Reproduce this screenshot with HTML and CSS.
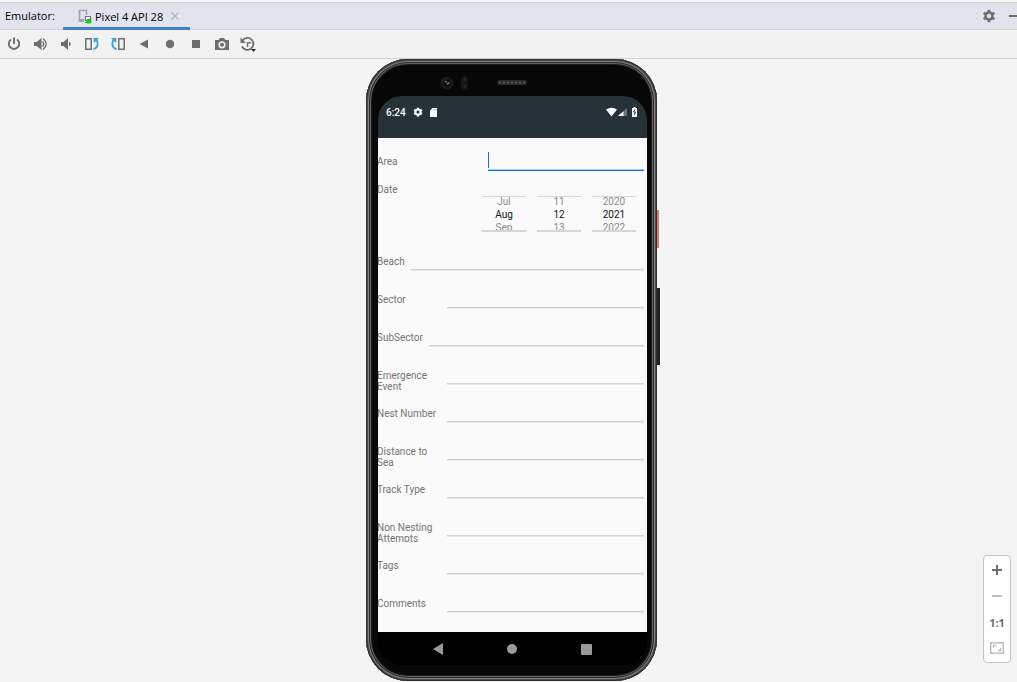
FILE: index.html
```html
<!DOCTYPE html>
<html lang="en">
<head>
<meta charset="utf-8">
<title>Emulator</title>
<link rel="stylesheet" href="styles.css">
</head>
<body>
<header class="titlebar">
  <span class="title">Emulator:</span>
  <div class="tab">
    <svg width="16" height="16" viewBox="0 0 16 16" aria-hidden="true">
      <path d="M7 13H2.500V2.500H9.500V7" fill="none" stroke="#9aa7b0" stroke-width="1.600"/>
      <path d="M2 11h5v2.800H2z" fill="#9aa7b0"/>
      <path d="M8.500 8.500h5v4h-5z M8 14.500h4" fill="#fff" stroke="#8a63ad" stroke-width="1.200"/>
      <circle cx="12" cy="13" r="2.600" fill="#0bd01a"/>
    </svg>
    <span>Pixel 4 API 28</span>
    <button class="tab-close" aria-label="Close tab">
      <svg width="10" height="10" viewBox="0 0 10 10"><path d="M1.500 1.500l7 7M8.500 1.500l-7 7" stroke="#b3b8c0" stroke-width="1.200"/></svg>
    </button>
  </div>
  <div class="window-actions">
    <button class="icon-button" aria-label="Settings">
      <svg width="16" height="16" viewBox="0 0 16 16"><g fill="#6e6e6e"><path d="M6.600 1.800h2.800v12.400H6.600z"/><path d="M6.600 1.800h2.800v12.400H6.600z" transform="rotate(60 8 8)"/><path d="M6.600 1.800h2.800v12.400H6.600z" transform="rotate(120 8 8)"/><circle cx="8" cy="8" r="4.700"/></g><circle cx="8" cy="8" r="2.200" fill="#e1e4ec"/></svg>
    </button>
    <button class="icon-button" aria-label="Hide">
      <svg width="16" height="16" viewBox="0 0 16 16"><path d="M2 7h12v2H2z" fill="#6e6e6e"/></svg>
    </button>
  </div>
</header>

<nav class="toolbar" aria-label="Device controls">
  <button class="icon-button" aria-label="Power"><svg width="16" height="16" viewBox="0 0 16 16"><path d="M5 3.500A5.200 5.200 0 1 0 11 3.500M8 1.500V8" fill="none" stroke="#6e6e6e" stroke-width="1.900"/></svg></button>
  <button class="icon-button" aria-label="Volume up"><svg width="16" height="16" viewBox="0 0 16 16"><path d="M2 6h2.500l5-4v12l-5-4H2z" fill="#6e6e6e"/><path d="M10.500 5.500q2.500 2.500 0 5M11 2.500q6.500 5.500 0 11" fill="none" stroke="#6e6e6e" stroke-width="1.300"/></svg></button>
  <button class="icon-button" aria-label="Volume down"><svg width="16" height="16" viewBox="0 0 16 16"><path d="M3 6h2.500L10 2v12l-4.500-4H3z" fill="#6e6e6e"/><path d="M11 5.500q3.500 2.500 0 5z" fill="#6e6e6e"/></svg></button>
  <button class="icon-button" aria-label="Rotate left"><svg width="16" height="16" viewBox="0 0 16 16"><path d="M1.800 2.800h5.400v10.400H1.800z" fill="none" stroke="#6e6e6e" stroke-width="1.500"/><path d="M9.500 13.200C14.500 11.500 14.500 7 12.500 4" fill="none" stroke="#389fd6" stroke-width="1.900"/><path d="M9.500 2h5.500l-5 5z" fill="#389fd6"/></svg></button>
  <button class="icon-button" aria-label="Rotate right"><svg width="16" height="16" viewBox="0 0 16 16"><path d="M8.800 2.800h5.400v10.400H8.800z" fill="none" stroke="#6e6e6e" stroke-width="1.500"/><path d="M6.500 13.200C1.500 11.500 1.500 7 3.500 4" fill="none" stroke="#389fd6" stroke-width="1.900"/><path d="M6.500 2H1l5 5z" fill="#389fd6"/></svg></button>
  <button class="icon-button" aria-label="Back"><svg width="16" height="16" viewBox="0 0 16 16"><path d="M12 3.500v9L3.500 8z" fill="#6e6e6e"/></svg></button>
  <button class="icon-button" aria-label="Home"><svg width="16" height="16" viewBox="0 0 16 16"><circle cx="8" cy="8" r="4.200" fill="#6e6e6e"/></svg></button>
  <button class="icon-button" aria-label="Overview"><svg width="16" height="16" viewBox="0 0 16 16"><path d="M4 4h8v8H4z" fill="#6e6e6e"/></svg></button>
  <button class="icon-button" aria-label="Take screenshot"><svg width="16" height="16" viewBox="0 0 16 16"><path d="M1 4h3.500l1.500-2h4l1.500 2H15v10H1z" fill="#6e6e6e"/><circle cx="8" cy="8.800" r="3.600" fill="#f2f2f2"/><circle cx="8" cy="8.800" r="2" fill="#6e6e6e"/></svg></button>
  <button class="icon-button" aria-label="Snapshots"><svg width="18" height="16" viewBox="0 0 18 16"><path d="M3.500 4.500A6 6 0 1 1 3 10.500" fill="none" stroke="#6e6e6e" stroke-width="1.800"/><path d="M1.500 1.500v5.500H7z" fill="#6e6e6e"/><path d="M8.500 11V6.800h3.500" fill="none" stroke="#6e6e6e" stroke-width="1.400"/><path d="M12 13h5l-2.500 3z" fill="#222"/></svg></button>
</nav>

<main class="canvas">
  <div class="phone">
    <div class="bezel">
      <svg width="28" height="16" viewBox="0 0 28 16" aria-hidden="true"><circle cx="7" cy="8" r="6.500" fill="#1b1b1c"/><circle cx="7" cy="8" r="3.500" fill="#0b0b10"/><path d="M5 6l2 1.500M7 9.500l2.500-2" stroke="#77788a" stroke-width="1.500"/><rect x="21" y="1" width="7" height="14" rx="3" fill="#151516"/><path d="M24.500 3v3M24.500 10v3" stroke="#29292b" stroke-width="2"/></svg>
      <svg width="30" height="6" viewBox="0 0 30 6" aria-hidden="true"><rect width="30" height="5" rx="2.500" fill="#2b2b2b"/><path d="M2 2.500h26" stroke="#555" stroke-width="2" stroke-dasharray="2 2"/></svg>
    </div>
    <div class="screen">
      <div class="statusbar">
        <span class="clock">6:24</span>
        <svg width="10" height="10" viewBox="0 0 16 16" aria-hidden="true"><g fill="#fff"><path d="M6 1h4v14H6z"/><path d="M6 1h4v14H6z" transform="rotate(60 8 8)"/><path d="M6 1h4v14H6z" transform="rotate(120 8 8)"/><circle cx="8" cy="8" r="5.400"/></g><circle cx="8" cy="8" r="2.500" fill="#263238"/></svg>
        <svg width="8" height="9" viewBox="0 0 8 9" aria-hidden="true"><path d="M2.500 0H7v9H0V2.500z" fill="#fff"/><path d="M3 1v1.500M4.500 1v1.500M6 1v1.500" stroke="#8b9296" stroke-width=".7"/></svg>
        <svg class="signal" width="32" height="10" viewBox="0 0 32 10" aria-hidden="true"><path d="M0 2.500Q5.500-1 11 2.500L5.500 9.500z" fill="#fff"/><path d="M21 1v8h-9z" fill="#667075"/><path d="M17.500 4.200V9H12z" fill="#fff"/><path d="M27.500 0h2v1H31v9h-5V1h1.500z" fill="#fff"/><path d="M29 2.500L27.500 5h2L28 8" fill="none" stroke="#263238"/></svg>
      </div>
      <form class="form">
        <div class="row row-area"><label for="area">Area</label><input id="area" class="field active" type="text"></div>
        <div class="row row-date">
          <span class="label" id="date-label">Date</span>
          <div class="pickers" role="group" aria-labelledby="date-label">
            <div class="picker"><button type="button">Jul</button><input aria-label="Month" value="Aug"><button type="button">Sep</button></div>
            <div class="picker"><button type="button">11</button><input aria-label="Day" value="12"><button type="button">13</button></div>
            <div class="picker"><button type="button">2020</button><input aria-label="Year" value="2021"><button type="button">2022</button></div>
          </div>
        </div>
        <div class="row row-beach"><label for="beach">Beach</label><input id="beach" class="field" type="text"></div>
        <div class="row"><label for="sector">Sector</label><input id="sector" class="field" type="text"></div>
        <div class="row row-subsector"><label for="subsector">SubSector</label><input id="subsector" class="field" type="text"></div>
        <div class="row"><label for="emergence">Emergence Event</label><input id="emergence" class="field" type="text"></div>
        <div class="row"><label for="nest">Nest Number</label><input id="nest" class="field" type="text"></div>
        <div class="row"><label for="distance">Distance to Sea</label><input id="distance" class="field" type="text"></div>
        <div class="row"><label for="track">Track Type</label><input id="track" class="field" type="text"></div>
        <div class="row"><label for="attempts">Non Nesting Attempts</label><input id="attempts" class="field" type="text"></div>
        <div class="row"><label for="tags">Tags</label><input id="tags" class="field" type="text"></div>
        <div class="row row-last"><label for="comments">Comments</label><input id="comments" class="field" type="text"></div>
      </form>
      <div class="navbar">
        <button aria-label="Back"><svg width="12" height="12" viewBox="0 0 12 12"><path d="M11 0v12L1 6z" fill="#9a9a9a"/></svg></button>
        <button aria-label="Home"><svg width="12" height="12" viewBox="0 0 12 12"><circle cx="6" cy="6" r="5" fill="#9a9a9a"/></svg></button>
        <button aria-label="Overview"><svg width="12" height="12" viewBox="0 0 12 12"><rect x="1" y="1" width="11" height="11" rx="1" fill="#9a9a9a"/></svg></button>
      </div>
    </div>
    <span class="side-button power"></span>
    <span class="side-button volume"></span>
  </div>

  <div class="zoom-panel">
    <button aria-label="Zoom in"><svg width="16" height="16" viewBox="0 0 16 16"><path d="M7 3h2v4h4v2H9v4H7V9H3V7h4z" fill="#6e6e6e"/></svg></button>
    <button aria-label="Zoom out"><svg width="16" height="16" viewBox="0 0 16 16"><path d="M3 7h10v2H3z" fill="#bdbdbd"/></svg></button>
    <button class="actual-size">1:1</button>
    <button aria-label="Fit to screen"><svg width="16" height="16" viewBox="0 0 16 16"><path d="M1.700 2.700h12.600v10.600H1.700z" fill="none" stroke="#bdbdbd" stroke-width="1.500"/><path d="M4.500 8V5.500H7M9 10.500h2.500V8" fill="none" stroke="#bdbdbd" stroke-width="1.300"/></svg></button>
  </div>
</main>
</body>
</html>
```
FILE: styles.css
```css
* { box-sizing: border-box; }

body {
  margin: 0;
  min-height: 100vh;
  display: flex;
  flex-direction: column;
  background: #f4f4f4;
  color: #000;
  font: 11px "Open Sans", "Noto Sans", sans-serif;
}

button, input {
  margin: 0;
  padding: 0;
  border: 0;
  border-radius: 0;
  background: none;
  font: inherit;
  color: inherit;
  min-width: 0;
  outline: none;
}

svg { display: block; flex: none; }

/* Tool window header */
.titlebar {
  display: flex;
  align-items: stretch;
  height: 28px;
  margin-top: 2px;
  border-top: 1px solid #d1d1d1;
  border-bottom: 1px solid #d1d1d1;
  background: #e1e4ec;
  box-shadow: 0 -2px #f8f8f8;
}

.title {
  padding-left: 5px;
  width: 63px;
  line-height: 26px;
}

.tab {
  display: flex;
  align-items: center;
  padding: 2px 10px 0 14px;
  border-bottom: 3px solid #4083c9;
  margin-bottom: -1px;
  white-space: nowrap;
}

.tab span { margin-left: 2px; }

.tab-close { margin-left: 7px; }

.window-actions {
  display: flex;
  align-items: center;
  margin-left: auto;
  margin-right: -11px;
}

.icon-button {
  display: flex;
  align-items: center;
  justify-content: center;
  width: 26px;
  height: 26px;
}

.toolbar {
  display: flex;
  align-items: center;
  height: 29px;
  padding-left: 1px;
  background: #f2f2f2;
  border-bottom: 1px solid #d1d1d1;
}

/* Device area */
.canvas {
  position: relative;
  flex: 1;
  display: flex;
  justify-content: center;
  align-items: flex-start;
  padding-left: 6px;
}

.phone {
  position: relative;
  width: 291px;
  padding: 0 10px 16px 12px;
  border-radius: 42px;
  background: #070708;
  box-shadow:
    inset 0 0 0 1px #303030,
    inset 0 0 0 2px #4a4a4a,
    inset 0 0 0 3px #828282,
    inset 0 0 0 4px #2a2a2a,
    inset 0 0 0 5px #626262,
    inset 0 0 0 6px #1c1c1c;
}

.bezel {
  display: flex;
  align-items: center;
  gap: 29px;
  height: 37px;
  padding: 11px 0 0 62px;
}

.screen {
  overflow: hidden;
  border-radius: 24px;
  background: #000;
}

.statusbar {
  display: flex;
  align-items: center;
  gap: 7px;
  height: 42px;
  padding: 0 9px 10px 8px;
  background: #263238;
  color: #fff;
}

.clock { font: 500 10px Roboto, sans-serif; }

.signal { margin-left: auto; }

.form {
  padding: 12px 3px 0 0;
  background: #fafafa;
  color: #757575;
  font: 10px/11px Roboto, sans-serif;
}

.row {
  display: grid;
  grid-template-columns: 69px 1fr;
  align-items: start;
  height: 38px;
}

.row label, .label {
  max-height: 20px;
  margin-left: -1px;
  padding-right: 6px;
  overflow: hidden;
}

.field {
  height: 15px;
  width: 100%;
  border-bottom: 1px solid #e6e6e6;
  box-shadow: inset 0 -1px #d0d0d0;
}

.row-area {
  grid-template-columns: 110px 1fr;
  height: 34px;
}

.row-area label { margin-top: 6px; }

.field.active {
  height: 21px;
  border-bottom: 1px solid #0a6cff;
  box-shadow: inset 0 -1px #a9cbfb;
  background: linear-gradient(#0a6cff, #0a6cff) 0 2px / 1px 16px no-repeat;
}

.row-date {
  grid-template-columns: 104px 1fr;
  height: 72px;
}

.row-beach { grid-template-columns: 33px 1fr; }

.row-subsector { grid-template-columns: 51px 1fr; }

.row-beach label, .row-subsector label { padding-right: 0; }

.row-last { height: 34px; }

.pickers {
  display: flex;
  gap: 11px;
  margin-top: 12px;
}

.picker {
  display: flex;
  flex-direction: column;
  justify-content: center;
  width: 44px;
  height: 36px;
  padding-top: 1px;
  overflow: hidden;
  border-top: 1px solid #d6d6d6;
  border-bottom: 2px solid #d6d6d6;
}

.picker button, .picker input {
  flex: none;
  height: 13px;
  line-height: 13px;
  text-align: center;
}

.picker button { color: #8a8a8a; }

.picker input { width: 100%; color: #111; }

.navbar {
  display: flex;
  justify-content: center;
  align-items: center;
  gap: 62px;
  height: 33px;
  padding-right: 2px;
}

.side-button {
  position: absolute;
  left: 100%;
  width: 2px;
}

.side-button.power {
  top: 151px;
  height: 38px;
  background: #e8765c;
}

.side-button.volume {
  top: 229px;
  height: 77px;
  width: 3px;
  background: #222;
}

/* Floating zoom controls */
.zoom-panel {
  position: absolute;
  right: 6px;
  bottom: 19px;
  display: flex;
  flex-direction: column;
  width: 28px;
  padding: 1px 0;
  border: 1px solid #c4c4c4;
  border-radius: 4px;
  background: #fff;
}

.zoom-panel button {
  display: flex;
  align-items: center;
  justify-content: center;
  height: 26px;
}

.zoom-panel .actual-size {
  color: #6e6e6e;
  font: bold 11px "Open Sans", sans-serif;
}
```
